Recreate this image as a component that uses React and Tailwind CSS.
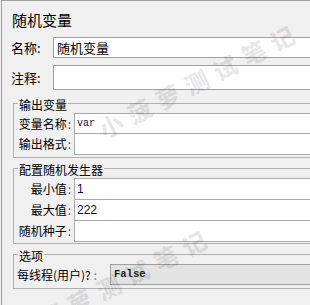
import React from "react";

const CJK = { fontFamily: '"Noto Sans CJK SC", "Noto Sans", sans-serif' };

function Colon() {
  return <span className="text-[#6b3a6b] px-[1px]">:</span>;
}

function Watermark({ cls }) {
  return (
    <div
      className={
        "pointer-events-none absolute -translate-x-1/2 -translate-y-1/2 -rotate-[27deg] whitespace-nowrap text-[24px] font-black tracking-[8px] text-black/[0.09] " +
        cls
      }
    >
      小菠萝测试笔记
    </div>
  );
}

function Row({ label, labelW, children, h, first }) {
  return (
    <div className={"flex items-stretch " + (first ? "" : "-mt-px")}>
      <div className={"flex items-center justify-end pr-[2px] text-[12px] " + labelW}>
        <span>{label}</span>
        <Colon />
      </div>
      <div className={"flex-1 flex items-center border border-[#a9a9a9] bg-white pl-[2px] " + h}>
        {children}
      </div>
    </div>
  );
}

export default function App() {
  return (
    <div className="relative w-[310px] h-[305px] overflow-hidden bg-[#f0f0f0] pl-px text-[#000]" style={CJK}>
      <div className="w-[345px] h-[320px] border-l border-t border-[#a0a0a0]">
        <div className="mt-[9px] pl-[10px] h-[20px] leading-[20px] text-[15px]">随机变量</div>

        <div className="mt-[7px] flex items-center">
          <div className="w-[51px] pl-[9px] text-[13px]">名称:</div>
          <div className="flex-1 h-[21px] border border-[#a0a0a0] bg-white pl-[3px] text-[13px] leading-[19px]">
            随机变量
          </div>
        </div>

        <div className="mt-[7px] flex items-center">
          <div className="w-[51px] pl-[9px] text-[13px]">注释:</div>
          <div className="flex-1 h-[25px] border border-[#a0a0a0] bg-white"></div>
        </div>

        <fieldset className="mt-[3px] ml-[11px] border border-[#b0b0b0] pb-[2px]">
          <legend className="ml-[4px] px-[1px] pt-[4px] text-[12px] leading-[16px]">输出变量</legend>
          <Row label="变量名称" labelW="w-[60px]" h="h-[21px]" first>
            <span className="text-[10px] text-[#101040]" style={{ fontFamily: '"Liberation Mono", monospace' }}>var</span>
          </Row>
          <Row label="输出格式" labelW="w-[60px]" h="h-[22px]"></Row>
        </fieldset>

        <fieldset className="ml-[11px] border border-[#b0b0b0] pb-[1px]">
          <legend className="ml-[4px] px-[1px] pt-[4px] text-[12px] leading-[16px]">配置随机发生器</legend>
          <Row label="最小值" labelW="w-[60px]" h="h-[22px]" first>
            <span className="text-[12px] text-[#101040]" style={{ fontFamily: '"Liberation Sans", sans-serif' }}>1</span>
          </Row>
          <Row label="最大值" labelW="w-[60px]" h="h-[22px]">
            <span className="text-[12px] text-[#101040]" style={{ fontFamily: '"Liberation Sans", sans-serif' }}>222</span>
          </Row>
          <Row label="随机种子" labelW="w-[60px]" h="h-[22px]"></Row>
        </fieldset>

        <fieldset className="ml-[11px] border border-[#b0b0b0] pb-[3px]">
          <legend className="ml-[4px] px-[1px] pt-[4px] text-[12px] leading-[16px]">选项</legend>
          <div className="flex items-stretch">
            <div className="w-[96px] pl-[3px] flex items-center text-[12px]">
              <span>每线程(用户)?</span>
              <span className="text-[#777] pl-[3px]">:</span>
            </div>
            <div className="flex-1 h-[21px] flex items-center border border-[#a0a0a0] bg-[#e3e3e3] pl-[3px]">
              <span className="text-[10.5px] font-bold text-[#202020]" style={{ fontFamily: '"Liberation Mono", monospace' }}>False</span>
            </div>
          </div>
        </fieldset>
      </div>

      <Watermark cls="left-[200px] top-[80px]" />
      <Watermark cls="left-[112px] top-[285px]" />
      <Watermark cls="left-[-78px] top-[14px]" />
    </div>
  );
}
